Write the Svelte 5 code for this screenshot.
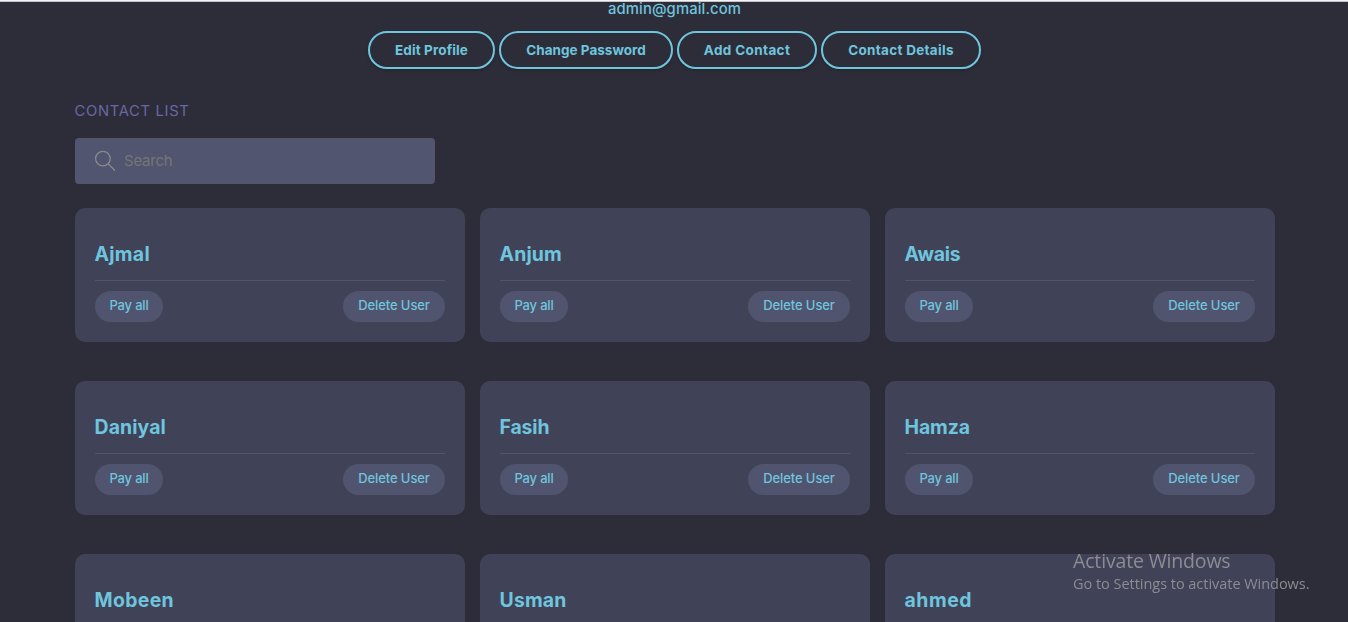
<script>
  const actions = [
    { label: 'Edit Profile', width: 73 },
    { label: 'Change Password', width: 119.5 },
    { label: 'Add Contact', width: 86.5 },
    { label: 'Contact Details', width: 105.5 }
  ];

  const contacts = [
    { name: 'Ajmal', width: 55.5, pay: true },
    { name: 'Anjum', width: 62.5, pay: true },
    { name: 'Awais', width: 56, pay: true },
    { name: 'Daniyal', width: 71.5, pay: true },
    { name: 'Fasih', width: 50, pay: true },
    { name: 'Hamza', width: 65.5, pay: true },
    { name: 'Mobeen', width: 79.5, pay: false },
    { name: 'Usman', width: 67, pay: false },
    { name: 'ahmed', width: 67.5, pay: false }
  ];

  // Tracks a label so that it spans the given width.
  function track(node, width) {
    const natural = node.getBoundingClientRect().width;
    node.style.letterSpacing = `${(width - natural) / node.textContent.length}px`;
  }
</script>

<main class="page">
  <header class="profile">
    <p class="email"><span class="fit" use:track={133}>admin@gmail.com</span></p>
    <nav class="actions">
      {#each actions as action}
        <button class="outline"><span class="fit" use:track={action.width}>{action.label}</span></button>
      {/each}
    </nav>
  </header>

  <section class="list">
    <h2><span class="fit" use:track={115}>CONTACT LIST</span></h2>
    <div class="search">
      <svg width="22" height="22" viewBox="0 0 22 22" fill="none" stroke="#8b8b8d" stroke-width="1.25" stroke-linecap="round">
        <circle cx="8.9" cy="8.6" r="7.3" />
        <path d="M14.2 13.9 20.6 20.3" />
      </svg>
      <span class="fit" use:track={48.5}>Search</span>
    </div>

    <div class="cards">
      {#each contacts as contact}
        <article class="card">
          <h3><span class="fit" use:track={contact.width}>{contact.name}</span></h3>
          {#if contact.pay}
            <div class="row">
              <button class="pill pay"><span class="fit" use:track={39}>Pay all</span></button>
              <button class="pill delete"><span class="fit" use:track={71.5}>Delete User</span></button>
            </div>
          {/if}
        </article>
      {/each}
    </div>
  </section>

  <aside class="watermark">
    <p class="title"><span class="fit" use:track={157.5}>Activate Windows</span></p>
    <p class="hint"><span class="fit" use:track={236.5}>Go to Settings to activate Windows.</span></p>
  </aside>
</main>

<style>
  :global(body) {
    margin: 0;
    background: #2d2d39;
    overflow: hidden;
  }

  .page {
    box-sizing: border-box;
    height: 622px;
    overflow: hidden;
    border-top: 1px solid #f5f5f7;
    background: #2d2d39;
    color: #6fc5de;
    font-family: Inter, "Open Sans", sans-serif;
    box-shadow: inset 0 1px 0 #c4c4c9;
  }

  .fit {
    display: inline-block;
    white-space: nowrap;
  }

  p,
  h2,
  h3 {
    margin: 0;
  }

  button {
    box-sizing: border-box;
    margin: 0;
    color: inherit;
    font-family: inherit;
  }

  .profile {
    padding-left: 1px;
  }

  .email {
    height: 30px;
    box-sizing: border-box;
    text-align: center;
    font-size: 14.8px;
    line-height: 16px;
    font-weight: 500;
  }

  .actions {
    display: grid;
    grid-template-columns: 127px 174px 140px 160px;
    gap: 4px;
    justify-content: center;
  }

  .outline {
    height: 38px;
    padding: 0;
    border: 2px solid #6fc5de;
    border-radius: 19px;
    background: transparent;
    font-size: 13.5px;
    line-height: 34px;
    font-weight: 700;
    box-shadow: 0 2px 3px rgba(0, 0, 0, 0.16);
  }

  .list {
    width: 1200px;
    margin: 0 73px 0 75px;
    padding-top: 32px;
  }

  h2 {
    height: 37px;
    margin-left: -0.5px;
    color: #6668a4;
    font-size: 14.8px;
    line-height: 20px;
    font-weight: 400;
  }

  .search {
    box-sizing: border-box;
    display: flex;
    align-items: center;
    width: 360px;
    height: 46px;
    padding-left: 19px;
    gap: 8px;
    border-radius: 4px;
    background: #51556f;
    color: #757575;
    font-size: 15px;
  }

  .search .fit {
    padding-bottom: 2px;
  }

  .cards {
    display: grid;
    grid-template-columns: repeat(3, 390px);
    gap: 39px 15px;
    margin-top: 24px;
  }

  .card {
    box-sizing: border-box;
    height: 134px;
    padding: 32px 20px 20px;
    border-radius: 10px;
    background: #404257;
  }

  h3 {
    height: 40px;
    border-bottom: 1px solid #51546e;
    font-size: 19.4px;
    line-height: 28px;
    font-weight: 700;
  }

  h3 .fit {
    margin-left: -0.5px;
  }

  .row {
    display: flex;
    justify-content: space-between;
    padding-top: 10px;
  }

  .pill {
    height: 31px;
    padding: 0 0 4px;
    border: 0;
    border-radius: 15.5px;
    background: #51546e;
    font-size: 13px;
    font-weight: 500;
  }

  .pay {
    width: 68px;
  }

  .delete {
    width: 102px;
  }

  .watermark {
    position: fixed;
    left: 1073px;
    top: 548px;
    color: #8c8c93;
    font-family: "Open Sans", "Noto Sans", sans-serif;
  }

  .title {
    font-size: 19.5px;
    line-height: 26px;
  }

  .hint {
    font-size: 14.5px;
    line-height: 20px;
  }
</style>
